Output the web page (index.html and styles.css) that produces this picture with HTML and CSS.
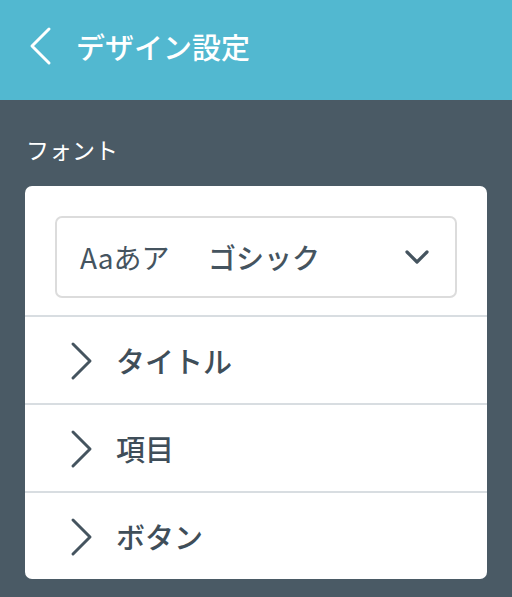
FILE: index.html
```html
<!DOCTYPE html>
<html lang="ja">
<head>
    <meta charset="UTF-8">
    <meta name="viewport" content="width=device-width, initial-scale=1.0">
    <title>デザイン設定</title>
    <link rel="stylesheet" href="styles.css">
</head>
<body>
    <header class="header">
        <svg class="back" width="24" height="40" viewBox="0 0 24 40">
            <polyline points="21,3 4,20 21,37" fill="none" stroke="#fff" stroke-width="3" stroke-linecap="round" stroke-linejoin="round"/>
        </svg>
        <h1>デザイン設定</h1>
    </header>

    <main class="content">
        <div class="section-label">フォント</div>
        <div class="card">
            <div class="select-wrap">
                <div class="select">
                    <span class="sample">Aaあア</span>
                    <span class="font-name">ゴシック</span>
                    <svg class="caret" width="26" height="18" viewBox="0 0 26 18">
                        <polyline points="3,4 13,14 23,4" fill="none" stroke="#45545f" stroke-width="3.2" stroke-linecap="round" stroke-linejoin="round"/>
                    </svg>
                </div>
            </div>
            <div class="row">
                <svg class="arrow" width="24" height="40" viewBox="0 0 24 40">
                    <polyline points="3,3 20,20 3,37" fill="none" stroke="#45545f" stroke-width="3" stroke-linecap="round" stroke-linejoin="round"/>
                </svg>
                <span>タイトル</span>
            </div>
            <div class="row">
                <svg class="arrow" width="24" height="40" viewBox="0 0 24 40">
                    <polyline points="3,3 20,20 3,37" fill="none" stroke="#45545f" stroke-width="3" stroke-linecap="round" stroke-linejoin="round"/>
                </svg>
                <span>項目</span>
            </div>
            <div class="row">
                <svg class="arrow" width="24" height="40" viewBox="0 0 24 40">
                    <polyline points="3,3 20,20 3,37" fill="none" stroke="#45545f" stroke-width="3" stroke-linecap="round" stroke-linejoin="round"/>
                </svg>
                <span>ボタン</span>
            </div>
        </div>
    </main>
</body>
</html>
```

FILE: styles.css
```css
body {
    margin: 0;
    font-family: "Noto Sans CJK JP", "Noto Sans", sans-serif;
    background-color: #4a5a65;
    height: 597px;
    overflow: hidden;
}
.header {
    height: 100px;
    background-color: #52b8d0;
    display: flex;
    align-items: center;
    padding-left: 28px;
    box-sizing: border-box;
}
.back {
    margin-top: -8px;
}
.header h1 {
    margin: -8px 0 0 24px;
    font-size: 29px;
    font-weight: 500;
    color: #fff;
    line-height: 1;
}
.content {
    padding: 0 25px;
}
.section-label {
    color: #fff;
    font-size: 23px;
    line-height: 1;
    padding-top: 38px;
    padding-left: 1px;
    height: 48px;
}
.card {
    background-color: #fff;
    border-radius: 7px;
    overflow: hidden;
}
.select-wrap {
    padding: 30px 30px 17px;
    border-bottom: 2px solid #d8dde1;
}
.select {
    height: 78px;
    border: 2px solid #dcdcdc;
    border-radius: 7px;
    display: flex;
    align-items: center;
    padding: 0 25px 0 23px;
    color: #45545f;
    font-size: 28px;
}
.sample {
    width: 128px;
}
.font-name {
    font-weight: 500;
    flex: 1;
}
.row {
    height: 86px;
    display: flex;
    align-items: center;
    padding-left: 45px;
    color: #3f4e59;
    font-size: 29px;
    font-weight: 500;
    border-bottom: 2px solid #d8dde1;
}
.row:last-child {
    border-bottom: none;
}
.arrow {
    margin-right: 22px;
    margin-top: 2px;
}
```
